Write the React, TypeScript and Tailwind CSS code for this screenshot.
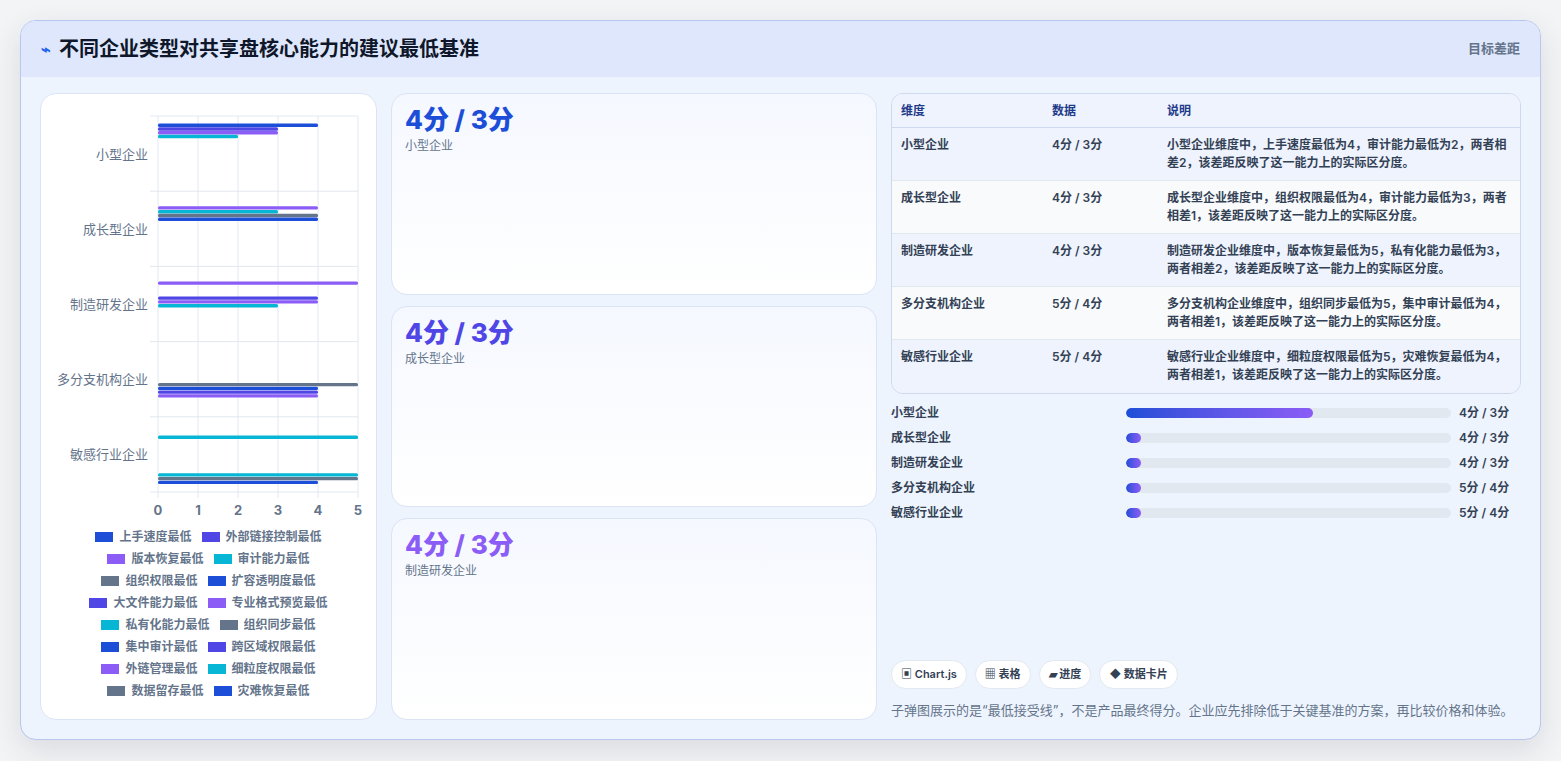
const BLUE = '#1d4ed8'
const INDIGO = '#4f46e5'
const PURPLE = '#8b5cf6'
const CYAN = '#06b6d4'
const SLATE = '#64748b'

const cats = ['小型企业', '成长型企业', '制造研发企业', '多分支机构企业', '敏感行业企业']
const bars: [number, number, string][][] = [
  [[0, 4, BLUE], [1, 3, INDIGO], [2, 3, PURPLE], [3, 2, CYAN]],
  [[2, 4, PURPLE], [3, 3, CYAN], [4, 4, SLATE], [5, 4, BLUE]],
  [[2, 5, PURPLE], [6, 4, INDIGO], [7, 4, PURPLE], [8, 3, CYAN]],
  [[9, 5, SLATE], [10, 4, BLUE], [11, 4, INDIGO], [12, 4, PURPLE]],
  [[3, 5, CYAN], [13, 5, CYAN], [14, 5, SLATE], [15, 4, BLUE]],
]

const legend: [string, string][][] = [
  [['上手速度最低', BLUE], ['外部链接控制最低', INDIGO]],
  [['版本恢复最低', PURPLE], ['审计能力最低', CYAN]],
  [['组织权限最低', SLATE], ['扩容透明度最低', BLUE]],
  [['大文件能力最低', INDIGO], ['专业格式预览最低', PURPLE]],
  [['私有化能力最低', CYAN], ['组织同步最低', SLATE]],
  [['集中审计最低', BLUE], ['跨区域权限最低', INDIGO]],
  [['外链管理最低', PURPLE], ['细粒度权限最低', CYAN]],
  [['数据留存最低', SLATE], ['灾难恢复最低', BLUE]],
]

const rows = [
  ['小型企业', '4分 / 3分', '小型企业维度中，上手速度最低为4，审计能力最低为2，两者相差2，该差距反映了这一能力上的实际区分度。'],
  ['成长型企业', '4分 / 3分', '成长型企业维度中，组织权限最低为4，审计能力最低为3，两者相差1，该差距反映了这一能力上的实际区分度。'],
  ['制造研发企业', '4分 / 3分', '制造研发企业维度中，版本恢复最低为5，私有化能力最低为3，两者相差2，该差距反映了这一能力上的实际区分度。'],
  ['多分支机构企业', '5分 / 4分', '多分支机构企业维度中，组织同步最低为5，集中审计最低为4，两者相差1，该差距反映了这一能力上的实际区分度。'],
  ['敏感行业企业', '5分 / 4分', '敏感行业企业维度中，细粒度权限最低为5，灾难恢复最低为4，两者相差1，该差距反映了这一能力上的实际区分度。'],
]

function Chart() {
  const x0 = 117
  const top = 22
  const band = 75.2
  return (
    <svg width="336" height="430" className="block">
      {[0, 1, 2, 3, 4, 5].map((t) => (
        <g key={t}>
          <line x1={x0 + t * 40} x2={x0 + t * 40} y1={top} y2={top + band * 5 + 6} stroke="#e2e8f0" />
          <text x={x0 + t * 40} y={top + band * 5 + 23} textAnchor="middle" fontSize="13" fontWeight="700" fill="#64748b">{t}</text>
        </g>
      ))}
      {[0, 1, 2, 3, 4, 5].map((i) => (
        <line key={i} x1={x0 - 8} x2={x0 + 200} y1={top + i * band} y2={top + i * band} stroke="#e2e8f0" />
      ))}
      {cats.map((c, ci) => (
        <g key={c}>
          <text x={x0 - 10} y={top + ci * band + band / 2 + 5} textAnchor="end" fontSize="13" fill="#64748b">{c}</text>
          {bars[ci].map(([i, v, col], k) => (
            <rect key={k} x={x0} y={top + ci * band + 7.5 + i * 3.76} width={v * 40} height={3.4} rx={1.5} fill={col} />
          ))}
        </g>
      ))}
    </svg>
  )
}

function StatCard({ value, label, color }: { value: string; label: string; color: string }) {
  return (
    <div className="flex-1 rounded-2xl border border-[#dbe4f5] bg-gradient-to-b from-[#f5f8ff] to-white px-[13px] py-[10px]">
      <div className={`text-[26px] font-extrabold leading-[32px] ${color}`}>{value}</div>
      <div className="mt-[1px] text-[12px] text-[#64748b]">{label}</div>
    </div>
  )
}

export default function App() {
  return (
    <div className="h-[761px] w-full bg-[#f3f4f6] p-[20px] pb-[20px]" style={{ fontFamily: 'Inter, "Noto Sans CJK SC", sans-serif' }}>
      <div className="flex h-[720px] flex-col overflow-hidden rounded-2xl border border-[#b9c6ee] bg-[#eef4fe] shadow-[0_10px_30px_rgba(30,41,59,0.12)]">
        <div className="flex h-[56px] items-center justify-between bg-[#dfe7fc] px-[20px]">
          <div className="flex items-center gap-[8px]">
            <span className="text-[16px] font-bold text-[#2563eb]">⌁</span>
            <span className="text-[20px] font-bold text-[#0f172a]">不同企业类型对共享盘核心能力的建议最低基准</span>
          </div>
          <span className="text-[13px] font-semibold text-[#64748b]">目标差距</span>
        </div>
        <div className="flex flex-1 gap-[14px] px-[19px] pt-[16px] pb-[19px]">
          <div className="flex w-[337px] flex-col items-center rounded-2xl border border-[#dbe4f5] bg-white">
            <Chart />
            <div className="mt-[4px] flex flex-col items-center gap-[4px]">
              {legend.map((r, i) => (
                <div key={i} className="flex gap-[10px]">
                  {r.map(([t, c]) => (
                    <div key={t} className="flex h-[18px] items-center gap-[6px] text-[12px] font-semibold text-[#64748b]">
                      <span className="h-[10px] w-[18px]" style={{ background: c }} />
                      {t}
                    </div>
                  ))}
                </div>
              ))}
            </div>
          </div>
          <div className="flex w-[486px] flex-col gap-[11px]">
            <StatCard value="4分 / 3分" label="小型企业" color="text-[#1d4ed8]" />
            <StatCard value="4分 / 3分" label="成长型企业" color="text-[#4f46e5]" />
            <StatCard value="4分 / 3分" label="制造研发企业" color="text-[#8b5cf6]" />
          </div>
          <div className="flex flex-1 flex-col">
            <div className="overflow-hidden rounded-xl border border-[#cfd9ee]">
              <div className="flex h-[34px] items-center border-b border-[#cfd9ee] bg-[#eef3fd] text-[12px] font-semibold text-[#1e3a8a]">
                <div className="w-[160px] pl-[9px]">维度</div>
                <div className="w-[115px]">数据</div>
                <div className="flex-1">说明</div>
              </div>
              {rows.map((r, i) => (
                <div key={i} className={`flex h-[53px] border-b border-[#e2e8f0] pt-[8px] text-[12px] font-semibold text-[#334155] last:border-b-0 ${i % 2 ? 'bg-[#f8fafc]' : 'bg-[#eef3fd]'}`}>
                  <div className="w-[160px] pl-[9px]">{r[0]}</div>
                  <div className="w-[115px]">{r[1]}</div>
                  <div className="flex-1 pr-[12px] leading-[18px]">{r[2]}</div>
                </div>
              ))}
            </div>
            <div className="mt-[10px] flex flex-col gap-[7px]">
              {rows.map((r, i) => (
                <div key={i} className="flex h-[18px] items-center text-[12px] font-semibold text-[#334155]">
                  <div className="w-[235px]">{r[0]}</div>
                  <div className="h-[10px] w-[325px] overflow-hidden rounded-full bg-[#e2e8f0]">
                    <div className={`h-full rounded-full bg-gradient-to-r from-[#1d4ed8] to-[#8b5cf6] ${i === 0 ? 'w-[187px]' : 'w-[15px]'}`} />
                  </div>
                  <div className="ml-[8px]">{r[1]}</div>
                </div>
              ))}
            </div>
            <div className="mt-auto flex gap-[8px]">
              {['▣ Chart.js', '▦ 表格', '▰ 进度', '◆ 数据卡片'].map((t) => (
                <span key={t} className="rounded-full border border-[#e2e8f0] bg-white px-[9px] py-[5px] text-[11px] font-semibold text-[#334155]">{t}</span>
              ))}
            </div>
            <div className="mt-[12px] text-[13px] text-[#64748b]">子弹图展示的是“最低接受线”，不是产品最终得分。企业应先排除低于关键基准的方案，再比较价格和体验。</div>
          </div>
        </div>
      </div>
    </div>
  )
}
